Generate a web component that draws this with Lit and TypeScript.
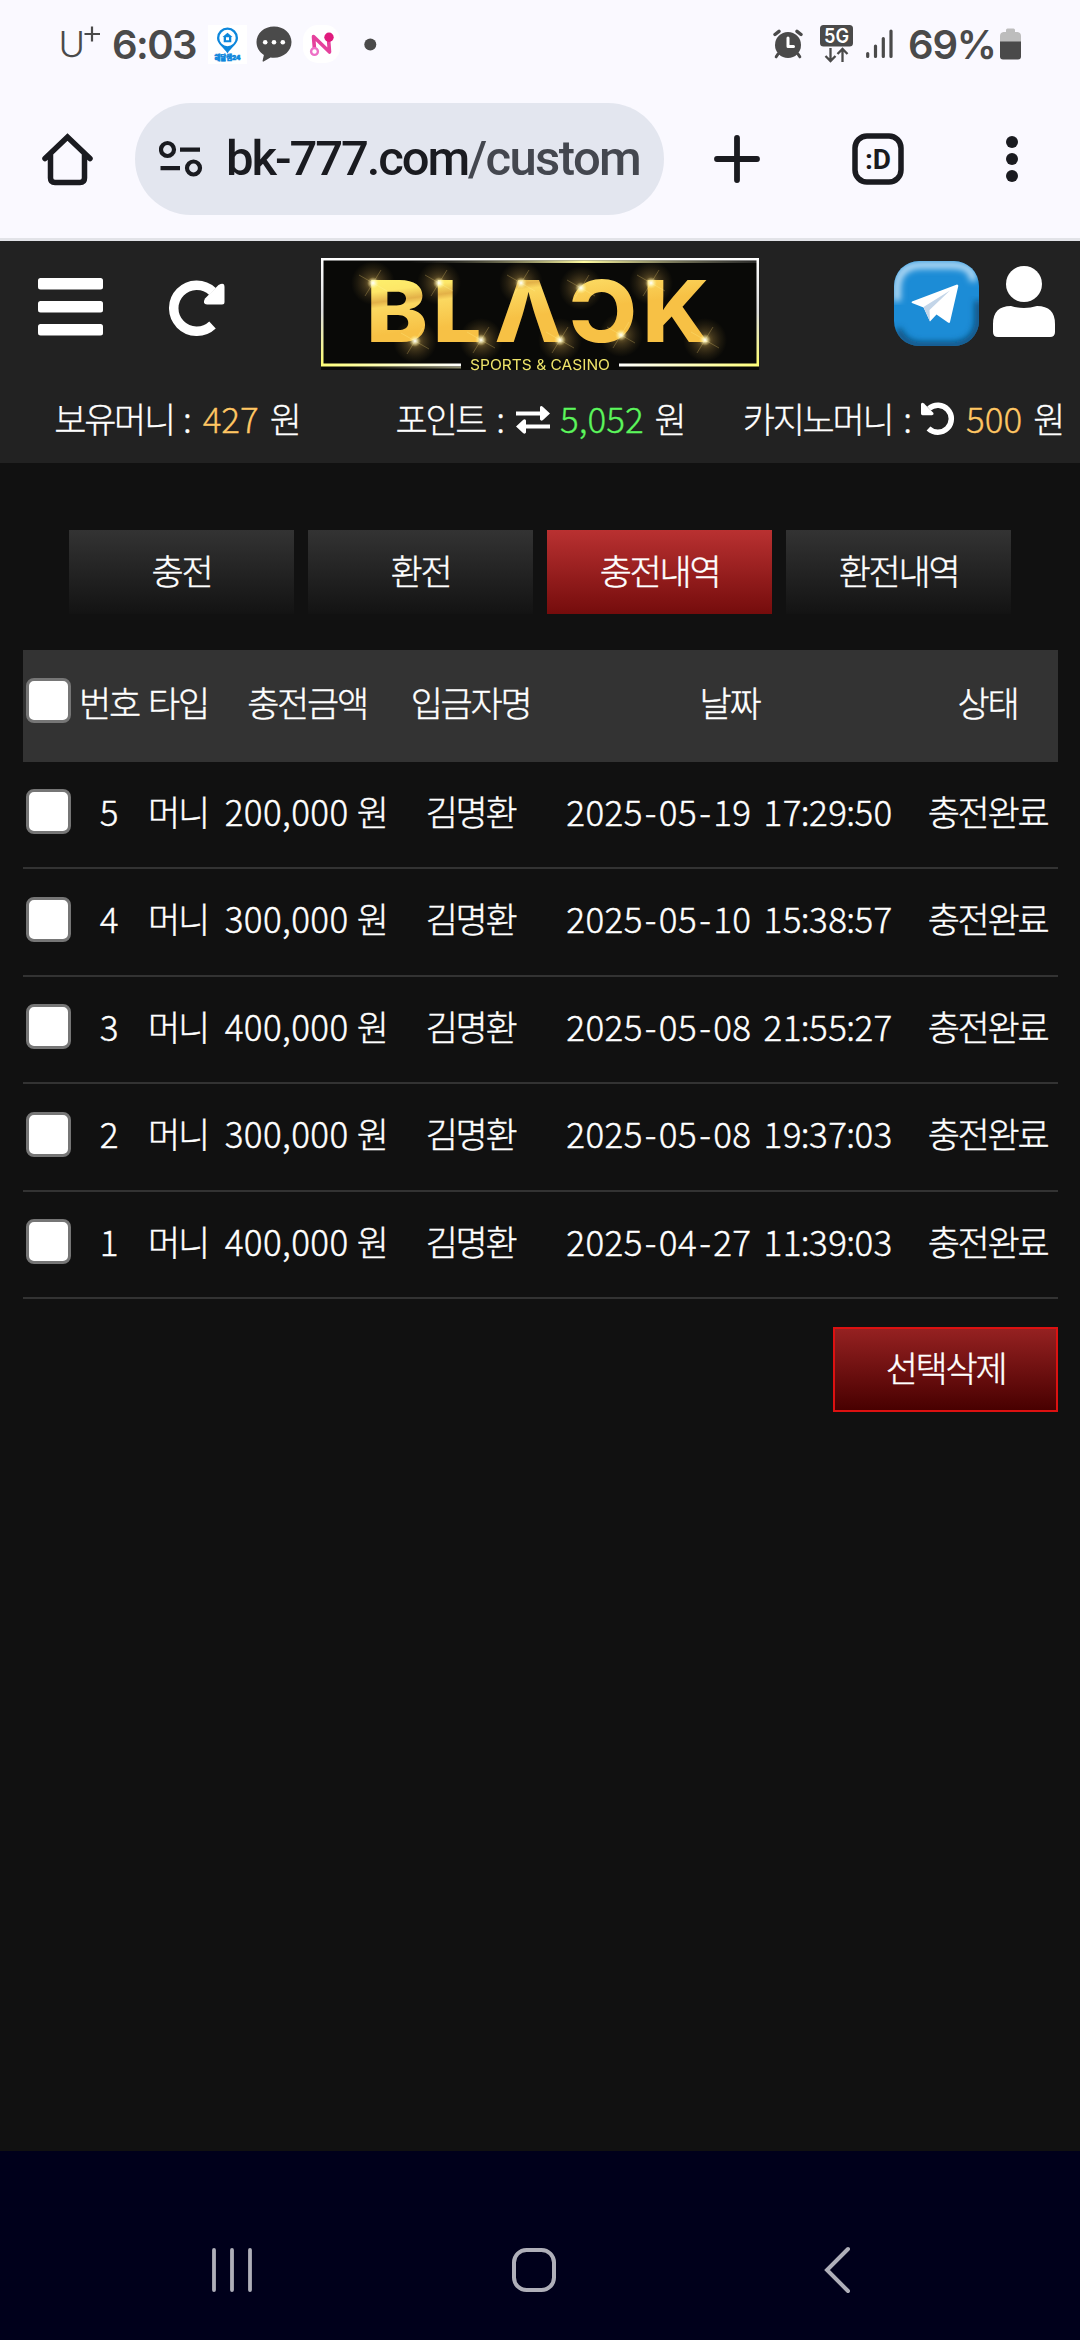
import { LitElement, html, css, svg } from "lit";
import { customElement, property } from "lit/decorators.js";

interface Deposit {
  no: number;
  type: string;
  amount: string;
  name: string;
  date: string;
  status: string;
}

const DEPOSITS: Deposit[] = [
  { no: 5, type: "머니", amount: "200,000 원", name: "김명환", date: "2025-05-19 17:29:50", status: "충전완료" },
  { no: 4, type: "머니", amount: "300,000 원", name: "김명환", date: "2025-05-10 15:38:57", status: "충전완료" },
  { no: 3, type: "머니", amount: "400,000 원", name: "김명환", date: "2025-05-08 21:55:27", status: "충전완료" },
  { no: 2, type: "머니", amount: "300,000 원", name: "김명환", date: "2025-05-08 19:37:03", status: "충전완료" },
  { no: 1, type: "머니", amount: "400,000 원", name: "김명환", date: "2025-04-27 11:39:03", status: "충전완료" },
];

const COLUMNS = ["번호", "타입", "충전금액", "입금자명", "날짜", "상태"];
const TABS = ["충전", "환전", "충전내역", "환전내역"];

@customElement("status-bar")
class StatusBar extends LitElement {
  static styles = css`
    :host {
      display: flex;
      justify-content: space-between;
      height: 88px;
      padding: 0 59px 0 56px;
      box-sizing: border-box;
      color: #4a4a4a;
      font-family: Inter, "Noto Sans CJK KR", sans-serif;
    }
    .side { display: flex; align-items: center; height: 88px; }
    .time { font-size: 40px; font-weight: 600; letter-spacing: -1.6px; width: 96px; }
    .percent { font-size: 40px; font-weight: 600; letter-spacing: -1.2px; margin-left: 14px; width: 92px; }
    svg { display: block; flex: none; }
    .gap-a { margin-left: 9px; }
    .gap-b { margin-left: 11px; }
    .gap-c { margin-left: 24px; }
    .gap-d { margin-left: 17px; }
    .gap-e { margin-left: 13px; }
  `;
  render() {
    return html`
      <div class="side">
        <svg width="56" height="48" viewBox="-4 -4 56 48">
          <text x="-1.500" y="33" font-size="36" font-weight="300" fill="#4a4a4a">U</text>
          <path d="M24.500 10H40M32 2.500V17.500" stroke="#4a4a4a" stroke-width="2.200" fill="none" />
        </svg>
        <span class="time">6:03</span>
        <svg width="39" height="39" viewBox="0 0 39 39">
          <rect width="39" height="39" fill="#fff" />
          <path fill-rule="evenodd" fill="#0d87dc" d="M19.500 2.500a10.500 10.500 0 0 1 10.500 10.500c0 6-7 9.500-10.500 15.500C16 22.500 9 19 9 13A10.500 10.500 0 0 1 19.500 2.500zm0 2.300a8.200 8.200 0 1 0 0 16.400a8.200 8.200 0 0 0 0-16.400z" />
          <path fill-rule="evenodd" fill="#0d87dc" d="M19.500 7.800l5 4.200h-1.200v5.300h-7.600V12h-1.200zm-1.500 4.500v3h3v-3z" />
          <text x="6.500" y="35" font-size="6.500" font-weight="900" fill="#0d87dc" stroke="#0d87dc" stroke-width=".6" textLength="26" lengthAdjust="spacingAndGlyphs">해달샘24</text>
        </svg>
        <svg class="gap-a" width="36" height="36" viewBox="0 0 36 36">
          <path fill="#4a4a4a" d="M18 0.500c9.800 0 17.500 6.800 17.500 15.600S27.800 31.800 18 31.800c-1.200 0-2.400-.1-3.500-.3L7.600 35.600C6.900 36 6.400 35.500 6.600 34.800L7.900 29C3.300 26.200.5 21.500.5 16.100.5 7.300 8.200.5 18 .5z" />
          <circle cx="9.200" cy="16.200" r="2.300" fill="#fff" /><circle cx="18" cy="16.200" r="2.300" fill="#fff" /><circle cx="26.800" cy="16.200" r="2.300" fill="#fff" />
        </svg>
        <svg class="gap-b" width="37" height="38" viewBox="0 0 37 38">
          <defs><linearGradient id="n" x1="0" y1="1" x2="1" y2="0"><stop offset="0" stop-color="#ee6fc6" /><stop offset="1" stop-color="#e01b7d" /></linearGradient></defs>
          <rect width="37" height="38" rx="15" fill="#fff" />
          <path d="M11.500 24.500L10.500 11.500L26.500 27L25.500 14" fill="none" stroke="#e5419c" stroke-width="3.600" stroke-linecap="round" stroke-linejoin="round" />
          <circle cx="11.500" cy="26.500" r="3.400" fill="#fff" stroke="#ee6fc6" stroke-width="2.400" />
          <circle cx="26" cy="12.200" r="4.700" fill="#e01b7d" />
        </svg>
        <svg class="gap-c" width="13" height="13"><circle cx="6.300" cy="6.500" r="6" fill="#4a4a4a" /></svg>
      </div>
      <div class="side">
        <svg width="30" height="30" viewBox="0 0 30 30">
          <g fill="none" stroke="#4a4a4a" stroke-linecap="round"><path d="M2 5.500L6 2.300M28 5.500L24 2.300" stroke-width="3.400" /><path d="M5 25l-1.800 2.800M25 25l1.800 2.800" stroke-width="3" /></g>
          <circle cx="15" cy="16" r="13" fill="#4a4a4a" />
          <path d="M15 9v8.500h5.500" fill="none" stroke="#fff" stroke-width="3" stroke-linecap="round" stroke-linejoin="round" />
        </svg>
        <svg class="gap-d" width="33" height="38" viewBox="0 0 33 38">
          <rect width="33" height="21.500" rx="3.500" fill="#4a4a4a" />
          <text x="16.500" y="17.800" font-size="20" font-weight="600" fill="#fff" text-anchor="middle" textLength="25" lengthAdjust="spacingAndGlyphs">5G</text>
          <path d="M10.500 23v13M5.500 31l5 5l5-5M22.500 37V24M17.500 29l5-5l5 5" fill="none" stroke="#4a4a4a" stroke-width="2.300" />
        </svg>
        <svg class="gap-e" width="28" height="30" viewBox="0 0 28 30">
          <path d="M1.700 24.500V27.500M9.500 17V27.500M17.300 9.500V27.500M25 2V27.500" stroke="#4a4a4a" stroke-width="3.200" stroke-linecap="round" />
        </svg>
        <span class="percent">69%</span>
        <svg width="21" height="32" viewBox="0 0 21 32">
          <path fill="#bdbdbd" d="M6 2q0-1.500 1.500-1.500h6q1.500 0 1.500 1.500v2h2.500Q21 4.500 21 8v6H0V8Q0 4.500 3.500 4H6z" />
          <path fill="#4a4a4a" d="M0 13.500h21V28.500q0 3-3 3H3q-3 0-3-3z" />
        </svg>
      </div>
    `;
  }
}

@customElement("browser-bar")
class BrowserBar extends LitElement {
  static styles = css`
    :host {
      display: flex;
      align-items: center;
      height: 153px;
      padding: 0 60px 8px 41px;
      box-sizing: border-box;
      border-bottom: 3px solid #e2e3e8;
      font-family: Roboto, sans-serif;
    }
    svg { display: block; flex: none; }
    .pill {
      display: flex;
      align-items: center;
      width: 529px;
      height: 112px;
      margin: 0 50px 0 41px;
      padding: 0 23px 0 24px;
      box-sizing: border-box;
      border-radius: 56px;
      background: #e3e6ef;
    }
    .url {
      flex: 1;
      margin-left: 23px;
      overflow: hidden;
      white-space: nowrap;
      font-size: 49px;
      line-height: 70px;
      font-weight: 500;
      letter-spacing: -2.100px;
      color: #1a1b20;
    }
    .path { color: #44474f; letter-spacing: -1.600px; }
    .tabs { margin: 0 102px 0 92px; }
  `;
  render() {
    return html`
      <svg width="53" height="54" viewBox="0 0 53 54">
        <path d="M4 26.500L26.500 5L49 26.500M9.500 22V46Q9.500 50.500 14 50.500H39Q43.500 50.500 43.500 46V22" fill="none" stroke="#1a1b20" stroke-width="5.500" stroke-linecap="round" />
      </svg>
      <div class="pill">
        <svg width="44" height="38" viewBox="0 0 44 38">
          <g fill="none" stroke="#1a1b20" stroke-width="4.200"><circle cx="8.500" cy="9.500" r="6.500" /><circle cx="34.500" cy="28" r="6.500" /><path d="M21 9.700H41M1.500 28.200H21" /></g>
        </svg>
        <div class="url">bk-777.com<span class="path">/customer</span></div>
      </div>
      <svg width="46" height="48" viewBox="0 0 46 48"><path d="M3 24H43M23 3V45" stroke="#1a1b20" stroke-width="5.800" stroke-linecap="round" /></svg>
      <svg class="tabs" width="52" height="52" viewBox="0 0 52 52">
        <rect x="3" y="3" width="46" height="46" rx="12" fill="none" stroke="#1a1b20" stroke-width="5.500" />
        <text x="26" y="35.500" font-size="28" font-weight="700" fill="#1a1b20" text-anchor="middle">:D</text>
      </svg>
      <svg width="12" height="48" viewBox="0 0 12 48" fill="#1a1b20"><circle cx="6" cy="7" r="6" /><circle cx="6" cy="24" r="6" /><circle cx="6" cy="41" r="6" /></svg>
    `;
  }
}

@customElement("brand-logo")
class BrandLogo extends LitElement {
  static styles = css`
    :host, svg { display: block; }
    svg { font-family: Inter, sans-serif; isolation: isolate; }
    .spark { mix-blend-mode: screen; }
  `;
  render() {
    const sparks = [[52, 25], [118, 25], [200, 25], [260, 30], [330, 25], [94, 83], [160, 82], [239, 82], [300, 77], [384, 82]];
    return html`
      <svg width="438" height="113" viewBox="0 0 438 113">
        <defs>
          <linearGradient id="gold" gradientUnits="userSpaceOnUse" x1="0" y1="22" x2="8" y2="84">
            <stop offset="0" stop-color="#fdf36e" /><stop offset="0.300" stop-color="#fde768" /><stop offset="0.470" stop-color="#e3b148" /><stop offset="0.560" stop-color="#fbd860" /><stop offset="1" stop-color="#f7c145" />
          </linearGradient>
          <linearGradient id="side" x1="0" y1="0" x2="0" y2="1"><stop offset="0" stop-color="#fff" /><stop offset=".5" stop-color="#ddd" /><stop offset="1" stop-color="#ffff6e" /></linearGradient>
          <linearGradient id="foot-l" x1="0" x2="1"><stop offset="0" stop-color="#ffff7a" /><stop offset="1" stop-color="#fff" /></linearGradient>
          <linearGradient id="foot-r" x1="0" x2="1"><stop offset="0" stop-color="#fff" /><stop offset="1" stop-color="#ffff7a" /></linearGradient>
          <linearGradient id="foot-shade" x1="0" x2="1"><stop offset="0" stop-color="#77765a" stop-opacity="0" /><stop offset="1" stop-color="#8e8d70" /></linearGradient>
          <linearGradient id="sheen" x1="0" x2="1"><stop offset=".2" stop-color="#777" stop-opacity="0" /><stop offset=".6" stop-color="#fffca0" /><stop offset="1" stop-color="#777" stop-opacity=".3" /></linearGradient>
          <radialGradient id="glow"><stop offset="0" stop-color="#b89a50" stop-opacity=".75" /><stop offset=".4" stop-color="#8a6c30" stop-opacity=".4" /><stop offset="1" stop-color="#5a4618" stop-opacity="0" /></radialGradient>
          <radialGradient id="core"><stop offset="0" stop-color="#fff" /><stop offset=".4" stop-color="#fff3b0" stop-opacity=".7" /><stop offset="1" stop-color="#e0b850" stop-opacity="0" /></radialGradient>
        </defs>
        <rect width="438" height="112" fill="#090907" />
        ${sparks.map(([x, y]) => svg`<circle class="spark" cx=${x} cy=${y} r="22" fill="url(#glow)" />`)}
        <rect width="438" height="2.500" fill="#fff" />
        <rect y="2.500" width="438" height="2.500" fill="url(#sheen)" />
        <rect width="2.500" height="108" fill="url(#side)" />
        <rect x="435.500" width="2.500" height="108" fill="url(#side)" />
        <rect y="105.500" width="140" height="3" fill="url(#foot-l)" />
        <rect x="298" y="105.500" width="140" height="3" fill="url(#foot-r)" />
        <rect x="30" y="108.500" width="110" height="2" fill="url(#foot-shade)" />
        <g font-size="85.500" font-weight="800" fill="url(#gold)">
          <text x="45" y="84" textLength="62" lengthAdjust="spacingAndGlyphs">B</text><text x="112" y="84">L</text><text x="173.500" y="84" textLength="69" lengthAdjust="spacingAndGlyphs">Λ</text><text x="248" y="84" textLength="68" lengthAdjust="spacingAndGlyphs">Ɔ</text><text x="321.500" y="84" textLength="67" lengthAdjust="spacingAndGlyphs">K</text>
        </g>
        ${sparks.map(([x, y]) => svg`<circle class="spark" cx=${x} cy=${y} r="6" fill="url(#core)" /><path class="spark" d=${`M${x - 14} ${y - 8}L${x + 14} ${y + 8}M${x - 8} ${y + 13}L${x + 8} ${y - 13}`} stroke="#a88c48" stroke-opacity=".5" stroke-width=".8" />`)}
        <text x="149" y="111.700" font-size="14.500" fill="#eee46a" textLength="140" lengthAdjust="spacingAndGlyphs">SPORTS &amp; CASINO</text>
      </svg>
    `;
  }
}

@customElement("site-header")
class SiteHeader extends LitElement {
  static styles = css`
    :host { display: block; height: 222px; background: #222; color: #fff; }
    .bar { display: flex; align-items: flex-start; height: 142px; padding: 17px 25px 0 38px; box-sizing: border-box; }
    svg { display: block; flex: none; }
    .menu { margin-top: 20px; }
    .reload { margin: 22px 95px 0 66px; }
    .telegram { margin: 3px 14px 0 135px; }
    .user { margin-top: 8px; }
    .balances { display: grid; grid-template-columns: 354px 372px 354px; height: 70px; }
    .balance {
      display: flex;
      align-items: center;
      justify-content: center;
      white-space: nowrap;
      font: 300 35px/70px "Noto Sans CJK KR", sans-serif;
      -webkit-text-stroke: 0.3px;
      height: 70px;
    }
    .ko { letter-spacing: -2.3px; }
    .colon { margin: 0 8px 0 11px; }
    .wide { margin: 0 11px 0 9px; }
    .won { margin-left: 11px; }
    .gold { color: #ffc663; }
    .green { color: #5cf65c; }
    .icon { margin: 3px 9px 0 2px; }
    .turn { margin: 0 11px 0 1px; }
  `;
  render() {
    return html`
      <div class="bar">
        <svg class="menu" width="65" height="58" viewBox="0 0 65 58" fill="#fff"><rect width="65" height="11.500" rx="2.500" /><rect y="23" width="65" height="11.500" rx="2.500" /><rect y="46" width="65" height="11.500" rx="2.500" /></svg>
        <svg class="reload" width="57" height="56" viewBox="0 0 57 56">
          <path d="M43.500 45A23 23 0 1 1 43.500 11.500" fill="none" stroke="#fff" stroke-width="9.500" />
          <path fill="#fff" d="M49.500 5Q55.500 1.500 55.500 7V22Q55.500 24.500 53 24.500H38Q33 24 36 18.500Z" />
        </svg>
        <brand-logo></brand-logo>
        <svg class="telegram" width="85" height="85" viewBox="0 0 85 85">
          <defs>
            <clipPath id="tile"><rect width="85" height="85" rx="25" /></clipPath>
            <filter id="soft"><feGaussianBlur stdDeviation="3" /></filter>
          </defs>
          <g clip-path="url(#tile)">
            <rect width="85" height="85" fill="#1c8cd6" />
            <path d="M3 40V28Q3 4 28 4H57Q80 4 79 20" fill="none" stroke="#bfe0f7" stroke-width="7" filter="url(#soft)" />
            <path d="M84 40V60Q82 83 58 84H28Q10 84 4 68" fill="none" stroke="#0b4671" stroke-width="6" filter="url(#soft)" />
          </g>
          <path fill="#fff" d="M18 40.500L63 23.500Q64.500 23.500 64.300 25L56 61Q55.500 62.500 54 61.500L42.500 53.500L36 60.500L29.500 46.500L18 42Q17 41 18 40.500Z" />
          <path fill="#c3d5e8" d="M29.500 46L56 29.500L35.500 49L36 60.500Z" />
        </svg>
        <svg class="user" width="62" height="72" viewBox="0 0 62 72" fill="#fff">
          <circle cx="31" cy="18" r="18" />
          <path d="M18 40Q31 44 44 40Q62 40 62 58V66Q62 71 57 71H5Q0 71 0 66V58Q0 40 18 40Z" />
        </svg>
      </div>
      <div class="balances">
        <div class="balance"><span class="ko">보유머니</span><span class="colon wide">:</span><span class="gold">427</span><span class="won ko">원</span></div>
        <div class="balance"><span class="ko">포인트</span><span class="colon">:</span>
          <svg class="icon" width="36" height="28" viewBox="0 0 36 28" fill="#fff"><path d="M1 5.500H25V1Q26 -1 28 1L35 7.500L28 14Q26 15.500 25 13.500V9.500H1ZM35 18.500H11V14.500Q10 12.500 8 14L1 20.500L8 27Q10 28.500 11 26.500V22.500H35Z" /></svg>
          <span class="green">5,052</span><span class="won ko">원</span></div>
        <div class="balance"><span class="ko">카지노머니</span><span class="colon">:</span>
          <svg class="icon turn" width="34" height="34" viewBox="0 0 34 34"><path d="M8 7.500A13.500 13.500 0 1 1 7.500 27.500" fill="none" stroke="#fff" stroke-width="5.500" /><path fill="#fff" d="M0 3Q1 1 3 2.500L12.500 12Q13 14 11 14.200H1.500Q0 14 0 12.500Z" /></svg>
          <span class="gold">500</span><span class="won ko">원</span></div>
      </div>
    `;
  }
}

@customElement("deposit-table")
class DepositTable extends LitElement {
  @property({ attribute: false }) rows: Deposit[] = [];
  static styles = css`
    :host { display: block; width: 1035px; font: 300 35px/50px "Noto Sans CJK KR", sans-serif; color: #fff; -webkit-text-stroke: 0.4px; }
    .row {
      display: grid;
      grid-template-columns: 51px 70px 68px 190px 137px 381px 138px;
      align-items: center;
      height: 107.500px;
      box-sizing: border-box;
      border-bottom: 2px solid #333;
      text-align: center;
      white-space: nowrap;
    }
    .head { height: 111.500px; background: #333; }
    .cell { margin-bottom: 7px; }
    .head .cell { margin-bottom: 5px; }
    .check {
      width: 45px;
      height: 45px;
      margin-left: 3px;
      margin-bottom: 5px;
      box-sizing: border-box;
      border: 3px solid #767676;
      border-radius: 8px;
      background: #fff;
    }
    .head .check { margin-bottom: 8px; }
    .ko { letter-spacing: -2.300px; }
    .num { letter-spacing: 0.400px; }
    .dash { margin: 0 2px; }
    .space { margin: 0 2px; }
    .colon { margin: 0 -1px; }
    .last { padding-right: 3px; }
  `;
  private date(value: string) {
    const kinds: Record<string, string> = { "-": "dash", " ": "space", ":": "colon" };
    return value.split(/([-: ])/).map((part) => (kinds[part] ? html`<span class=${kinds[part]}>${part}</span>` : part));
  }
  render() {
    return html`
      <div class="row head"><span class="check"></span>${COLUMNS.map((c, i) => html`<span class="cell ko ${i === 5 ? "last" : ""}">${c}</span>`)}</div>
      ${this.rows.map((r) => html`
        <div class="row">
          <span class="check"></span>
          <span class="cell">${r.no}</span>
          <span class="cell ko">${r.type}</span>
          <span class="cell num">${r.amount}</span>
          <span class="cell ko">${r.name}</span>
          <span class="cell num">${this.date(r.date)}</span>
          <span class="cell ko last">${r.status}</span>
        </div>`)}
    `;
  }
}

@customElement("app-root")
class AppRoot extends LitElement {
  static styles = css`
    :host { display: flex; flex-direction: column; height: 2340px; width: 1080px; overflow: hidden; background: #faf9ff; }
    .page {
      display: flex;
      flex-direction: column;
      height: 1688px;
      padding: 67px 22px 0 23px;
      box-sizing: border-box;
      background: #111;
      color: #fff;
    }
    .tabs { display: flex; gap: 14px; margin: 0 46px 36px; }
    .tab, .delete {
      width: 225px;
      height: 84px;
      box-sizing: border-box;
      font: 300 35px/80px "Noto Sans CJK KR", sans-serif;
      -webkit-text-stroke: 0.4px;
      letter-spacing: -2.300px;
      text-align: center;
      background: linear-gradient(#333, #131313);
    }
    .active { background: linear-gradient(#b93131, #750c0c); }
    .delete {
      align-self: flex-end;
      margin-top: 28px;
      height: 85px;
      line-height: 76px;
      border: 2px solid #dd1111;
      background: linear-gradient(#952121, #480000);
    }
    .nav { display: flex; align-items: center; height: 189px; padding: 49px 0 0 212px; box-sizing: border-box; background: #00001b; }
    .nav svg { display: block; }
    .home { margin: 0 267px 0 259px; }
  `;
  render() {
    return html`
      <status-bar></status-bar>
      <browser-bar></browser-bar>
      <site-header></site-header>
      <main class="page">
        <div class="tabs">${TABS.map((t, i) => html`<div class="tab ${i === 2 ? "active" : ""}">${t}</div>`)}</div>
        <deposit-table .rows=${DEPOSITS}></deposit-table>
        <div class="delete">선택삭제</div>
      </main>
      <div class="nav">
        <svg width="40" height="46" viewBox="0 0 40 46"><path d="M2 3V43M20 3V43M38 3V43" stroke="#afafb9" stroke-width="3.800" stroke-linecap="round" /></svg>
        <svg class="home" width="46" height="46" viewBox="0 0 46 46"><rect x="3" y="3" width="40" height="40" rx="12.500" fill="none" stroke="#afafb9" stroke-width="4" /></svg>
        <svg width="26" height="48" viewBox="0 0 26 48"><path d="M24 3L3 24L24 45" fill="none" stroke="#afafb9" stroke-width="4" stroke-linecap="round" /></svg>
      </div>
    `;
  }
}
